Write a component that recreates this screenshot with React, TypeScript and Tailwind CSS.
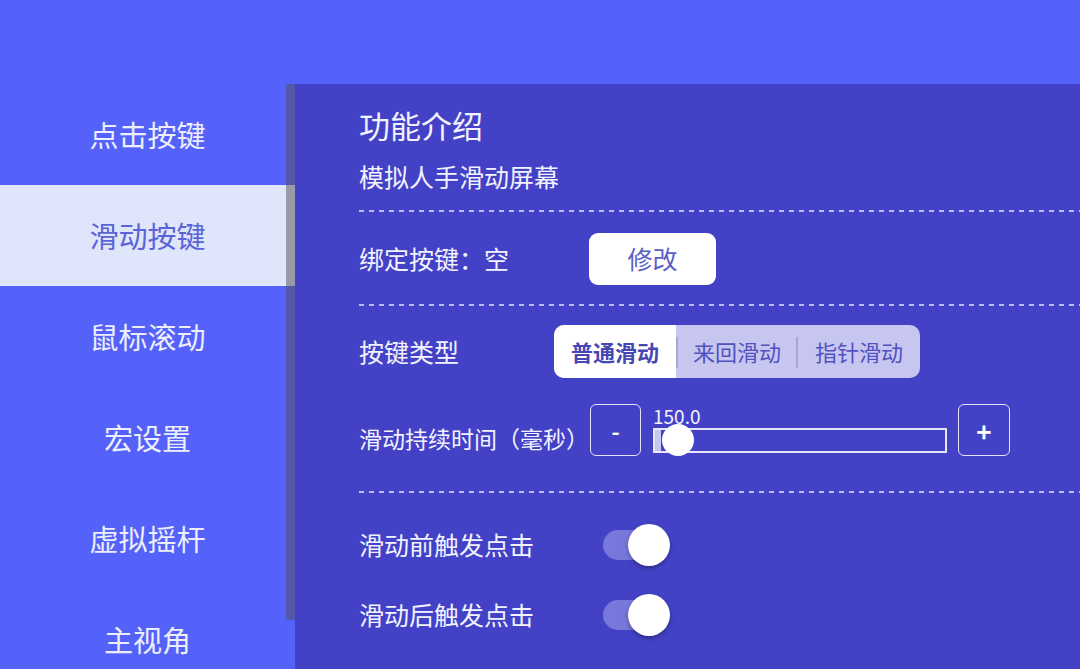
import React from "react";

const menu = ["点击按键", "滑动按键", "鼠标滚动", "宏设置", "虚拟摇杆", "主视角"];

function Dashed() {
  return (
    <div className="h-[2px] w-full bg-[repeating-linear-gradient(90deg,#b9bdf2_0px,#b9bdf2_5px,transparent_5px,transparent_10px)]" />
  );
}

function Toggle() {
  return (
    <div className="relative h-[30px] w-[57px] rounded-full bg-[#7878dc]">
      <div className="absolute left-[25px] top-[-6px] size-[42px] rounded-full bg-white shadow-[0_2px_4px_rgba(0,0,0,0.35)]" />
    </div>
  );
}

export default function App() {
  return (
    <div
      className="flex h-[669px] w-[1080px] flex-col overflow-hidden bg-[#5562fa]"
      style={{ fontFamily: '"Noto Sans CJK SC", "Noto Sans", sans-serif' }}
    >
      <div className="h-[84px] shrink-0" />
      <div className="flex flex-1">
        <aside className="relative w-[295px] shrink-0">
          {menu.map((m, i) => (
            <div
              key={m}
              className={
                i === 1
                  ? "flex h-[101px] items-center justify-center bg-[#dfe5fb] text-[29px] text-[#5b63d6]"
                  : "flex h-[101px] items-center justify-center text-[29px] text-[#eceefc]"
              }
            >
              {m}
            </div>
          ))}
          <div className="absolute right-0 top-0 h-[536px] w-[9px] bg-[#544d55]/50" />
        </aside>

        <main className="flex flex-1 flex-col bg-[#4342c7] pl-[64px] text-[#f2f2ff]">
          <div className="mt-[21px] text-[31px] leading-[40px]">功能介绍</div>
          <div className="mt-[14px] text-[25px] leading-[34px]">模拟人手滑动屏幕</div>
          <div className="mt-[17px]">
            <Dashed />
          </div>

          <div className="mt-[21px] flex h-[52px] items-center">
            <div className="w-[230px] text-[25px]">绑定按键：空</div>
            <button className="h-[52px] w-[127px] rounded-[9px] bg-white text-[25px] text-[#5a5fc8]">修改</button>
          </div>
          <div className="mt-[19px]">
            <Dashed />
          </div>

          <div className="mt-[19px] flex h-[53px] items-center">
            <div className="w-[195px] text-[25px]">按键类型</div>
            <div className="flex h-[53px] w-[366px] items-center rounded-[10px] bg-[#c6c6f0] text-[22px]">
              <div className="flex h-full w-[122px] items-center justify-center rounded-l-[10px] bg-white font-bold text-[#4646b4]">
                普通滑动
              </div>
              <div className="relative flex h-full w-[122px] items-center justify-center text-[#5151c0]">
                来回滑动
                <span className="absolute left-0 top-[12px] h-[31px] w-[2px] bg-[#a6a6d2]" />
                <span className="absolute right-0 top-[12px] h-[31px] w-[2px] bg-[#a6a6d2]" />
              </div>
              <div className="flex h-full w-[122px] items-center justify-center text-[#5151c0]">指针滑动</div>
            </div>
          </div>

          <div className="mt-[26px] flex h-[52px] items-center">
            <div className="mt-[16px] w-[231px] text-[23px]">滑动持续时间（毫秒）</div>
            <button className="flex h-[52px] w-[51px] items-center justify-center rounded-[6px] border-[1.5px] border-white/85 text-[22px] font-bold text-white">
              -
            </button>
            <div className="ml-[12px] flex h-[52px] w-[294px] flex-col">
              <div className="h-[24px] text-[19px] leading-[24px]">150.0</div>
              <div className="relative h-[25px] border-2 border-[#e6e6fa]">
                <div className="h-full w-[6px] bg-[#c6c6f0]" />
                <div className="absolute left-[7px] top-[-6px] size-[32px] rounded-full bg-white" />
              </div>
            </div>
            <button className="ml-[11px] flex h-[52px] w-[52px] items-center justify-center rounded-[6px] border-[1.5px] border-white/85 text-[26px] font-bold text-white">
              +
            </button>
          </div>
          <div className="mt-[35px]">
            <Dashed />
          </div>

          <div className="mt-[27px] flex h-[50px] items-center">
            <div className="w-[244px] text-[25px]">滑动前触发点击</div>
            <Toggle />
          </div>
          <div className="mt-[20px] flex h-[50px] items-center">
            <div className="w-[244px] text-[25px]">滑动后触发点击</div>
            <Toggle />
          </div>
        </main>
      </div>
    </div>
  );
}
